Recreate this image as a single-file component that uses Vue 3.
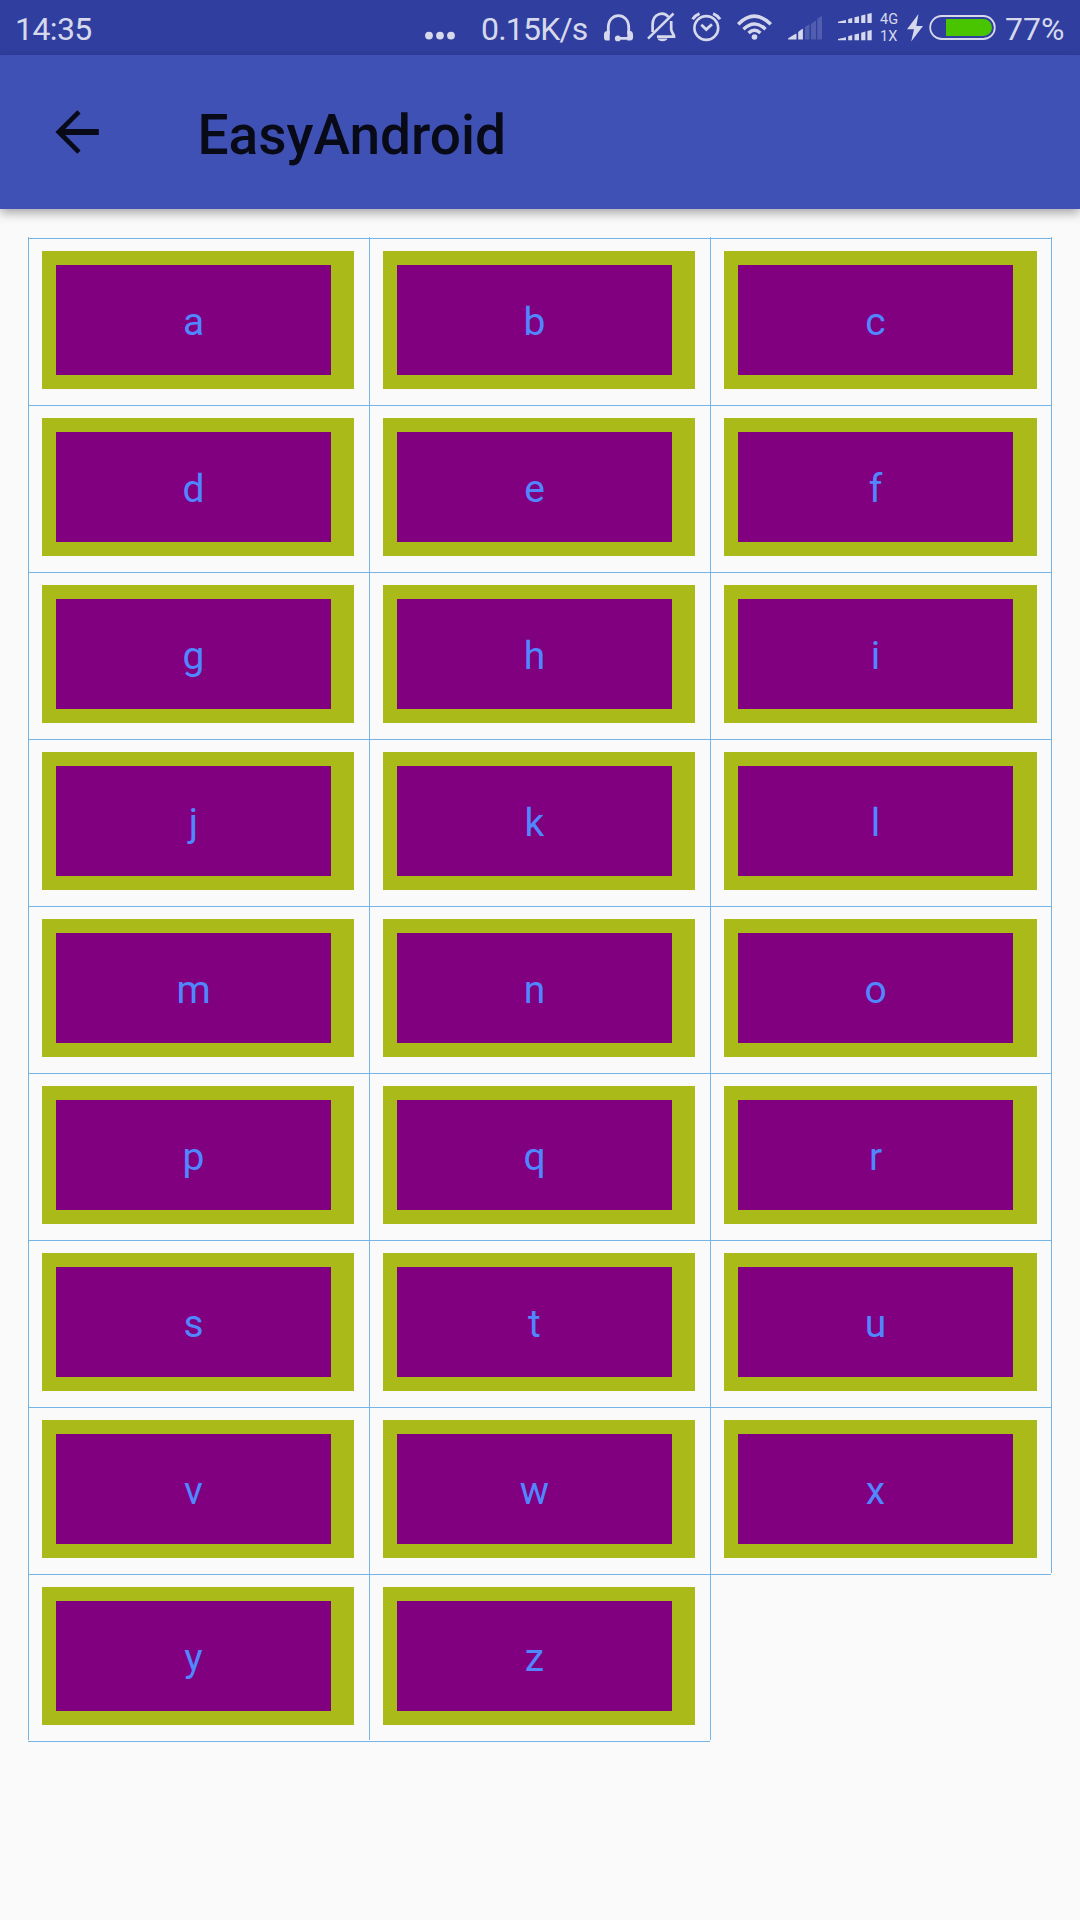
<script setup>
const letters = 'abcdefghijklmnopqrstuvwxyz'.split('')
</script>

<template>
  <div class="screen">
    <header class="status">
      <span class="clock">14:35</span>
      <svg class="dots" width="30" height="55" viewBox="425 0 30 55">
        <circle cx="429" cy="35.6" r="3.9" /><circle cx="440" cy="35.6" r="3.9" /><circle cx="451" cy="35.6" r="3.9" />
      </svg>
      <span class="speed">0.15K/s</span>
      <svg class="headset" width="30" height="55" viewBox="604 0 30 55">
        <path class="line" d="M608.3 34V27.5C608.3 11.7 628.7 11.7 628.7 27.5V34M618 38.3h10" stroke-width="2.8" />
        <path d="M609.7 31v9.5h-2.2c-3 0-3.6-1-3.6-4.5s.8-5 3.6-5zM627.3 31v9.5h2.2c3 0 3.6-1 3.6-4.5s-.8-5-3.6-5z" />
        <circle cx="617.8" cy="38.4" r="2.9" />
      </svg>
      <svg class="bell" width="30" height="55" viewBox="647 0 30 55">
        <path class="line" d="M652.6 32V25C652.6 12.5 664 11.5 668.4 17M671.2 21V29.5C671.2 32 674 34 674 36.6H657" stroke-width="2.7" />
        <path class="line" d="M648 38.6L673.5 13.5" stroke-width="2.5" />
        <path d="M657.5 38.5h10c-1 3.6-9 3.6-10 0z" />
      </svg>
      <svg class="alarm" width="31" height="55" viewBox="691 0 31 55">
        <circle class="line" cx="706.3" cy="28" r="11.9" stroke-width="2.6" />
        <path class="line" d="M701.3 24.8l5 4.7 5.6-5.3" stroke-width="2.8" />
        <path class="line" d="M692.6 19.3Q695 15.5 699.5 13.7M720 19.3Q717.6 15.5 713.1 13.7" stroke-width="3" />
      </svg>
      <svg class="wifi" width="36" height="55" viewBox="737 0 36 55">
        <path class="line" d="M738.2 24.2Q754.5 8.2 770.8 24.2M743.5 29.2Q754.5 18.8 765.5 29.2M748.6 33Q754.5 27.5 760.4 33" stroke-width="3.5" />
        <circle cx="754.5" cy="37" r="2.8" />
      </svg>
      <svg class="signal" width="35" height="55" viewBox="788 0 35 55">
        <path d="M788.2 39.5v-1.3l7.5-4.4q.8-.3.8.6v5.1zM798.2 39.5v-7.5l3.8-3q.9-.5.9.6v9.9z" />
        <path opacity=".2" d="M805 39.5V27l4.5-2.8v15.3zM811 39.5V24l5-3.5v19zM817.3 39.5V18.8l4.7-3v23.7z" />
      </svg>
      <svg class="dual" width="35" height="55" viewBox="838 0 35 55">
        <g v-for="dy in [0, 17.2]" :key="dy" :transform="`translate(0 ${dy})`">
          <path d="M838 23.1v-1.3l8-1.8v3.1zM848.2 23.1v-4l4-1.2v5.2zM854.5 23.1v-5.8l4.5-1.1v6.9zM861.2 23.1v-7.6l4.2-1.1v8.7zM867.4 23.1v-9.2l4.3-1v10.2z" />
        </g>
      </svg>
      <span class="net"><span>4G</span><span>1X</span></span>
      <svg class="bolt" width="16" height="55" viewBox="907 0 16 55">
        <path d="M918.5 14L907 29.3h7L911.2 41.5 923 26h-6.7z" />
      </svg>
      <svg class="battery" width="68" height="55" viewBox="929 0 68 55">
        <rect class="line" x="930.2" y="16" width="64.6" height="23" rx="11.5" stroke-width="1.8" />
        <path class="charge" d="M946 19h37.5a8.5 8.5 0 0 1 0 17H946z" />
      </svg>
      <span class="percent">77%</span>
    </header>

    <div class="toolbar">
      <svg class="back" width="46" height="44" viewBox="54 110 46 44">
        <path d="M55.4 132L77.3 110.3l3.3 3.3L65.2 129H98.8v6H65.2l15.4 15.4-3.3 3.3z" />
      </svg>
      <h1>EasyAndroid</h1>
    </div>

    <main class="grid">
      <div v-for="l in letters" :key="l" class="cell">
        <div class="frame"><div class="tile">{{ l }}</div></div>
      </div>
    </main>
  </div>
</template>

<style>
body { background: #fafafa; }
</style>

<style scoped>
.screen {
  width: 1080px;
  height: 1920px;
  overflow: hidden;
  background: #fafafa;
  font-family: Roboto, sans-serif;
}
.status {
  display: flex;
  height: 55px;
  background: #303f9f;
  color: #d6d9ec;
  font-size: 32px;
  line-height: 58px;
  white-space: nowrap;
}
.status > * { flex: none; }
.status svg { fill: #d6d9ec; }
.status .line { fill: none; stroke: #d6d9ec; }
.status .charge { fill: #49c500; }
.clock { width: 79px; margin-left: 15px; letter-spacing: -0.6px; }
.dots { margin-left: 331px; }
.speed { width: 107px; margin-left: 26px; letter-spacing: -0.8px; }
.headset { margin-left: 16px; }
.bell { margin-left: 13px; }
.alarm { margin-left: 14px; }
.wifi { margin-left: 15px; }
.signal { margin-left: 15px; }
.dual { margin-left: 15px; }
.net {
  display: flex;
  flex-direction: column;
  width: 20px;
  margin-left: 7px;
  padding-top: 11px;
  font-size: 14.5px;
  line-height: 17px;
}
.bolt { margin-left: 7px; }
.battery { margin-left: 6px; }
.percent { margin-left: 8px; }
.toolbar {
  position: relative;
  display: flex;
  align-items: center;
  height: 154px;
  background: #3f51b5;
  box-shadow: 0 4px 10px rgba(0, 0, 0, 0.34);
}
.back {
  margin-left: 54px;
  fill: #080a17;
}
h1 {
  margin: 6px 0 0 97.5px;
  color: #080a17;
  font-size: 55px;
  font-weight: 500;
  line-height: 64px;
}
.grid {
  display: grid;
  grid-template-columns: repeat(3, 341px);
  grid-auto-rows: 167px;
  padding: 28px;
}
.cell {
  position: relative;
  box-sizing: border-box;
  padding: 14px 15px 15px 14px;
}
.cell:nth-child(3n) { padding-right: 14px; }
.cell::before,
.cell::after {
  content: "";
  position: absolute;
}
.cell::before {
  inset: 0 -1px 0 0;
  border: solid #74b5e6;
  border-width: 0 1px;
}
.cell::after {
  inset: 1px 0 -2px 0;
  border: solid #74b5e6;
  border-width: 1px 0;
}
.frame {
  height: 138px;
  box-sizing: border-box;
  padding: 14px;
  background: #aaba18;
}
.tile {
  width: 275px;
  height: 110px;
  background: #800080;
  color: #5087ff;
  font-size: 39px;
  line-height: 115px;
  text-align: center;
}
</style>
